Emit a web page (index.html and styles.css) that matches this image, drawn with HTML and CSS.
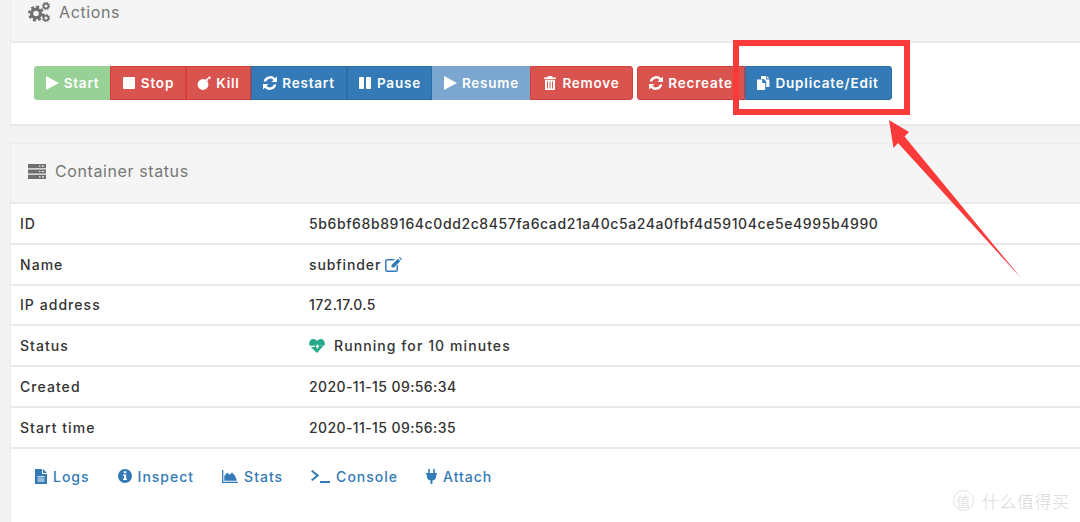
FILE: index.html
```html
<!DOCTYPE html>
<html lang="en">
<head>
<meta charset="utf-8">
<title>Container details</title>
<link rel="stylesheet" href="styles.css">
</head>
<body>
<svg class="defs" width="0" height="0" aria-hidden="true">
  <symbol id="i-play" viewBox="0 0 14 14"><path d="M1 0 L14 7 L1 14Z"/></symbol>
  <symbol id="i-stop" viewBox="0 0 14 14"><rect x="1" y="1" width="12" height="12" rx="1"/></symbol>
  <symbol id="i-bomb" viewBox="0 0 14 14"><circle cx="6" cy="8.500" r="5.400"/><path d="M8.500 3.500l1.600-1.400 1.500 1.500-1.400 1.600z"/><circle cx="12.400" cy="1.800" r="1.300"/></symbol>
  <symbol id="i-refresh" viewBox="0 0 14 14"><path d="M14 .5v5.500H8.500l2-2A4.300 4.300 0 0 0 3.200 5.600H.6A6.800 6.800 0 0 1 12.200 2.300zM0 13.500V8h5.500l-2 2a4.300 4.300 0 0 0 7.300-1.600h2.600A6.800 6.800 0 0 1 1.800 11.700z"/></symbol>
  <symbol id="i-pause" viewBox="0 0 14 14"><rect x="1" y="1" width="5" height="12" rx=".8"/><rect x="8" y="1" width="5" height="12" rx=".8"/></symbol>
  <symbol id="i-trash" viewBox="0 0 14 14"><path fill-rule="evenodd" d="M5 0h4l.8 1.600H13V3H1V1.600h3.200zM2 3.800h10V14H2zM4 5.500v7h1v-7zM6.500 5.500v7h1v-7zM9 5.500v7h1v-7z"/></symbol>
  <symbol id="i-copy" viewBox="0 0 14 14"><path d="M5 0h5v3.400h3.400V11H10.200V5.500L7.600 3H5z"/><path d="M1 3.400h5.200v3.600h3V14H1z"/><path d="M10.800 0l2.600 2.600h-2.600z"/></symbol>
  <symbol id="i-gears" viewBox="0 0 22 20">
    <g fill="none" stroke="currentColor">
      <circle cx="8" cy="11.500" r="4.400" stroke-width="3.200"/>
      <circle cx="8" cy="11.500" r="6.800" stroke-width="2.400" stroke-dasharray="3 2.340"/>
      <circle cx="18" cy="4" r="2.400" stroke-width="1.700"/>
      <circle cx="18" cy="4" r="3.500" stroke-width="1.100" stroke-dasharray="1.300 1.450"/>
      <circle cx="18" cy="16" r="2.400" stroke-width="1.700"/>
      <circle cx="18" cy="16" r="3.500" stroke-width="1.100" stroke-dasharray="1.300 1.450"/>
    </g>
  </symbol>
  <symbol id="i-server" viewBox="0 0 18 15"><path fill-rule="evenodd" d="M0 0h18v4.200H0zM11 1.500v1.200h1.500V1.500zM14 1.500v1.200h2V1.500zM0 5.400h18v4.200H0zM11 6.900v1.200h1.500V6.900zM14 6.900v1.200h2V6.900zM0 10.800h18V15H0zM11 12.300v1.200h1.500v-1.200zM14 12.300v1.200h2v-1.200z"/></symbol>
  <symbol id="i-edit" viewBox="0 0 17 15"><path d="M2.500 2H10L8.500 3.500h-6a1 1 0 0 0-1 1v8a1 1 0 0 0 1 1h8a1 1 0 0 0 1-1V9l1.500-1.500v5A2.500 2.500 0 0 1 10.500 15h-8A2.500 2.500 0 0 1 0 12.500v-8A2.500 2.500 0 0 1 2.500 2z"/><path d="M12.800 1.700l2.500 2.500L9 10.500H6.500V8zM13.800.7l1-.7 2.200 2.200-.7 1z"/></symbol>
  <symbol id="i-heart" viewBox="0 0 16 14"><path d="M8 14 1.800 8h3.500l1-2 2 4 1.700-3h4.200zM.8 6.800C-1 3.500 1.300 0 4.300 0 6 0 7.200 1 8 2c.8-1 2-2 3.700-2 3 0 5.300 3.500 3.500 6.800h-5.900L8.300 5 6.400 8.200 5 5.800 4.600 6.800z"/></symbol>
  <symbol id="i-file" viewBox="0 0 12 15"><path fill-rule="evenodd" d="M0 0h7v5h5v10H0zM2.500 7.200v1h7v-1zM2.500 9.400v1h7v-1zM2.500 11.600v1h7v-1zM8 0l4 4H8z"/></symbol>
  <symbol id="i-info" viewBox="0 0 14 14"><path fill-rule="evenodd" d="M7 0a7 7 0 1 1 0 14A7 7 0 0 1 7 0zM5.800 2.300v2h2.400v-2zM5 5.500v1.300h1v3H5V11h4V9.800H8.200V5.500z"/></symbol>
  <symbol id="i-chart" viewBox="0 0 16 13"><path d="M0 0h1.300v11.700H16V13H0z"/><path d="M2.300 10.700V6l2.800-3.500 2.500 2.300L10 2.500l3 3.200 2 5z"/></symbol>
  <symbol id="i-term" viewBox="0 0 20 13"><path d="M1.500 0 8.200 5.500 1.500 11 0 9.700 5 5.500 0 1.300z"/><rect x="9" y="11" width="10" height="2"/></symbol>
  <symbol id="i-plug" viewBox="0 0 11 15"><path d="M2.200 0h1.600v4h3.400V0h1.600v4H11v1.500h-.8V7a4.500 4.500 0 0 1-3.800 4.400V15H4.600v-3.600A4.500 4.500 0 0 1 .8 7V5.500H0V4h2.200z"/></symbol>
</svg>

<main class="page">
  <section class="card card-actions">
    <header class="card-head head-actions">
      <svg class="ico ico-gears"><use href="#i-gears"/></svg>
      <span>Actions</span>
    </header>
    <div class="toolbar">
      <div class="group">
        <a class="btn green"><svg class="ico"><use href="#i-play"/></svg>Start</a>
        <a class="btn red w-stop"><svg class="ico"><use href="#i-stop"/></svg>Stop</a>
        <a class="btn red w-kill"><svg class="ico"><use href="#i-bomb"/></svg>Kill</a>
        <a class="btn blue w-restart"><svg class="ico"><use href="#i-refresh"/></svg>Restart</a>
        <a class="btn blue w-pause"><svg class="ico"><use href="#i-pause"/></svg>Pause</a>
        <a class="btn blue-off w-resume"><svg class="ico"><use href="#i-play"/></svg>Resume</a>
        <a class="btn red w-remove"><svg class="ico"><use href="#i-trash"/></svg>Remove</a>
      </div>
      <div class="group">
        <a class="btn red w-recreate"><svg class="ico"><use href="#i-refresh"/></svg>Recreate</a>
        <a class="btn blue w-dup"><svg class="ico"><use href="#i-copy"/></svg>Duplicate/Edit</a>
      </div>
    </div>
  </section>

  <section class="card card-status">
    <header class="card-head head-status">
      <svg class="ico ico-server"><use href="#i-server"/></svg>
      <span>Container status</span>
    </header>
    <div class="row"><div class="key">ID</div><div class="val val-hash">5b6bf68b89164c0dd2c8457fa6cad21a40c5a24a0fbf4d59104ce5e4995b4990</div></div>
    <div class="row"><div class="key">Name</div><div class="val val-word">subfinder <svg class="ico ico-edit"><use href="#i-edit"/></svg></div></div>
    <div class="row"><div class="key">IP address</div><div class="val">172.17.0.5</div></div>
    <div class="row"><div class="key">Status</div><div class="val val-status"><svg class="ico ico-heart"><use href="#i-heart"/></svg>Running for 10 minutes</div></div>
    <div class="row"><div class="key">Created</div><div class="val">2020-11-15 09:56:34</div></div>
    <div class="row"><div class="key">Start time</div><div class="val">2020-11-15 09:56:35</div></div>
    <nav class="links">
      <a class="link"><svg class="ico ico-l12"><use href="#i-file"/></svg>Logs</a>
      <a class="link"><svg class="ico ico-l14"><use href="#i-info"/></svg>Inspect</a>
      <a class="link"><svg class="ico ico-l16"><use href="#i-chart"/></svg>Stats</a>
      <a class="link link-tight"><svg class="ico ico-l20"><use href="#i-term"/></svg>Console</a>
      <a class="link"><svg class="ico ico-l11"><use href="#i-plug"/></svg>Attach</a>
    </nav>
  </section>
</main>

<div class="callout-box"></div>
<svg class="callout-arrow" width="150" height="170" viewBox="0 0 150 170" aria-hidden="true">
  <path d="M4 2 L24 14 L19.500 18.500 L136 160 L13 25 L8.500 30Z"/>
</svg>
<div class="watermark"><span class="wm-badge">值</span><span>什么值得买</span></div>
</body>
</html>
```

FILE: styles.css
```css
* { box-sizing: border-box; }
html, body { margin: 0; height: 100%; }
body {
  position: relative;
  width: 1080px;
  height: 522px;
  overflow: hidden;
  background: #f3f3f3;
  font-family: Inter, "Noto Sans", sans-serif;
  font-size: 14px;
  color: #333;
}
.defs { position: absolute; }
.page { padding-left: 10px; }
.ico { fill: currentColor; display: block; flex: none; }

.card {
  background: #fff;
  border-left: 1px solid #ececec;
  width: 1070px;
}
.card-actions { height: 126px; border-bottom: 2px solid #e9e9e9; }
.card-status { margin-top: 17px; height: 380px; border-top: 1px solid #ececec; }

.card-head {
  display: flex;
  align-items: center;
  background: #f5f5f5;
  border-bottom: 2px solid #ebebeb;
  color: #777;
  font-size: 16px;
  letter-spacing: .6px;
}
.head-actions { height: 43px; padding: 0 0 17px 17px; gap: 9px; }
.head-status { height: 60px; padding: 0 0 4px 17px; gap: 9px; }
.ico-gears { width: 22px; height: 20px; color: #6f6f6f; }
.ico-server { width: 18px; height: 15px; color: #6f6f6f; }

.toolbar {
  display: flex;
  gap: 4px;
  padding: 23px 0 0 23px;
}
.group { display: flex; }
.btn {
  display: flex;
  align-items: center;
  justify-content: center;
  gap: 5px;
  width: 76px;
  height: 34px;
  color: #fff;
  font-size: 13.5px;
  font-weight: 600;
  letter-spacing: .8px;
  border: 1px solid transparent;
}
.btn .ico { width: 14px; height: 14px; }
.group .btn:first-child { border-radius: 3px 0 0 3px; }
.group .btn:last-child { border-radius: 0 3px 3px 0; }
.green { background: #97d196; border-color: #97d196; }
.red { background: #d9534f; border-color: #d43f3a; }
.blue { background: #337ab7; border-color: #2e6da4; }
.blue-off { background: #7ba6cf; border-color: #7ba6cf; }
.w-stop { width: 76px; }
.w-kill { width: 65px; }
.w-restart { width: 96px; }
.w-pause { width: 85px; }
.w-resume { width: 98px; }
.w-remove { width: 103px; }
.w-recreate { width: 108px; }
.w-dup { width: 147px; padding-right: 2px; }

.row {
  display: flex;
  align-items: center;
  height: 40.8px;
  border-bottom: 2px solid #e9e9e9;
  padding-left: 9px;
  font-weight: 500;
}
.key { width: 289px; letter-spacing: 1.05px; }
.val { display: flex; align-items: center; gap: 4px; letter-spacing: .4px; }
.val-hash { letter-spacing: .6px; }
.val-word { letter-spacing: .9px; }
.val-status { gap: 9px; letter-spacing: 1.08px; }
.ico-edit { width: 17px; height: 15px; color: #337ab7; }
.ico-heart { width: 16px; height: 14px; color: #26a88a; }

.links {
  display: flex;
  gap: 28px;
  padding: 19px 0 0 24px;
}
.link {
  display: flex;
  align-items: center;
  gap: 6px;
  color: #337ab7;
  font-weight: 500;
  letter-spacing: 1px;
}
.link-tight { gap: 5px; }
.ico-l12 { width: 12px; height: 15px; }
.ico-l14 { width: 14px; height: 14px; }
.ico-l16 { width: 16px; height: 13px; }
.ico-l20 { width: 20px; height: 13px; }
.ico-l11 { width: 11px; height: 15px; }

.callout-box {
  position: absolute;
  left: 733px;
  top: 40px;
  width: 177px;
  height: 75px;
  border: 6px solid #fb3a3a;
}
.callout-arrow {
  position: absolute;
  left: 885px;
  top: 118px;
  fill: #fb3a3a;
}
.watermark {
  position: absolute;
  left: 953px;
  top: 488px;
  display: flex;
  align-items: center;
  gap: 8px;
  color: #d9d9d9;
  font-family: "Noto Sans CJK SC", sans-serif;
  font-size: 17px;
  letter-spacing: .5px;
  font-weight: 300;
}
.wm-badge {
  display: flex;
  align-items: center;
  justify-content: center;
  width: 21px;
  height: 21px;
  border: 1px solid #e2e2e2;
  border-radius: 50%;
  font-size: 14px;
}
```
